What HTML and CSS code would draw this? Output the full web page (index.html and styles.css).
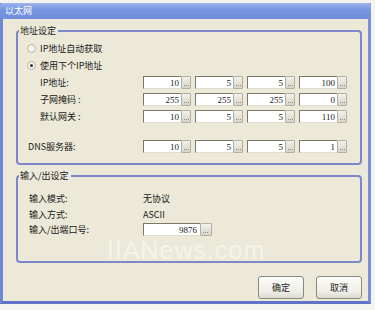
FILE: index.html
```html
<!DOCTYPE html>
<html>
<head>
<meta charset="utf-8">
<link rel="stylesheet" href="styles.css">
</head>
<body>
<div class="win">
  <div class="titlebar">以太网</div>
  <div class="client">
    <fieldset class="group g1">
      <legend>地址设定</legend>
      <div class="radio-row"><span class="radio"></span><span>IP地址自动获取</span></div>
      <div class="radio-row"><span class="radio checked"></span><span>使用下个IP地址</span></div>
      <div class="ip-row"><span class="lbl">IP地址:</span>
        <div class="ipbox"><span class="fld">10</span><span class="btn"></span></div>
        <div class="ipbox"><span class="fld">5</span><span class="btn"></span></div>
        <div class="ipbox"><span class="fld">5</span><span class="btn"></span></div>
        <div class="ipbox"><span class="fld">100</span><span class="btn"></span></div>
      </div>
      <div class="ip-row"><span class="lbl">子网掩码 :</span>
        <div class="ipbox"><span class="fld">255</span><span class="btn"></span></div>
        <div class="ipbox"><span class="fld">255</span><span class="btn"></span></div>
        <div class="ipbox"><span class="fld">255</span><span class="btn"></span></div>
        <div class="ipbox"><span class="fld">0</span><span class="btn"></span></div>
      </div>
      <div class="ip-row"><span class="lbl">默认网关 :</span>
        <div class="ipbox"><span class="fld">10</span><span class="btn"></span></div>
        <div class="ipbox"><span class="fld">5</span><span class="btn"></span></div>
        <div class="ipbox"><span class="fld">5</span><span class="btn"></span></div>
        <div class="ipbox"><span class="fld">110</span><span class="btn"></span></div>
      </div>
      <div class="ip-row dns"><span class="lbl">DNS服务器:</span>
        <div class="ipbox"><span class="fld">10</span><span class="btn"></span></div>
        <div class="ipbox"><span class="fld">5</span><span class="btn"></span></div>
        <div class="ipbox"><span class="fld">5</span><span class="btn"></span></div>
        <div class="ipbox"><span class="fld">1</span><span class="btn"></span></div>
      </div>
    </fieldset>
    <fieldset class="group g2">
      <legend>输入/出设定</legend>
      <div class="io-row"><span class="lbl">输入模式:</span><span>无协议</span></div>
      <div class="io-row"><span class="lbl">输入方式:</span><span>ASCII</span></div>
      <div class="io-row port"><span class="lbl">输入/出端口号:</span>
        <div class="ipbox wide"><span class="fld">9876</span><span class="btn"></span></div>
      </div>
    </fieldset>
    <div class="actions">
      <button class="pbtn">确定</button>
      <button class="pbtn">取消</button>
    </div>
    <div class="watermark">IIANews.com</div>
  </div>
</div>
</body>
</html>
```
FILE: styles.css
```css
html, body {
  margin: 0;
  padding: 0;
  background: #f4f4f2;
  width: 375px;
  height: 310px;
  overflow: hidden;
}
body {
  font-family: "Liberation Serif", "Noto Sans CJK SC", serif;
  font-size: 9px;
  color: #1a1a1a;
}
.win {
  margin-top: 3px;
  width: 371px;
  box-sizing: border-box;
  border-left: 3px solid #6f86d6;
  border-right: 3px solid #7a8fda;
  border-bottom: 3px solid #5f74c8;
  background: #ece9d8;
  position: relative;
}
.titlebar {
  height: 16px;
  margin: 0 -3px;
  padding-left: 5px;
  background: linear-gradient(#9db6ee, #7896e0 40%, #6f8edc);
  color: #fff;
  font-family: "Noto Sans CJK SC", sans-serif;
  font-size: 9px;
  line-height: 16px;
  border-radius: 3px 3px 0 0;
}
.client {
  padding: 6px 6px 6px 13px;
  height: 282px;
  box-sizing: border-box;
  position: relative;
}
.group {
  margin: 0;
  padding: 0 0 8px 0;
  border: 2px solid #7d87c9;
  border-radius: 4px;
  min-width: 0;
}
.group legend {
  margin-left: 1px;
  padding: 0 2px 0 1px;
  line-height: 12px;
  font-family: "Noto Sans CJK SC", sans-serif;
  font-size: 9px;
  color: #222;
}
.g1 { padding-top: 3px; padding-bottom: 8px; }
.radio-row {
  height: 17px;
  display: flex;
  align-items: center;
  padding-left: 9px;
  gap: 4px;
}
.radio {
  width: 7px;
  height: 7px;
  border-radius: 50%;
  border: 1px solid #b9b6aa;
  background: #f4f2ea;
  position: relative;
}
.radio.checked::after {
  content: "";
  position: absolute;
  left: 2px;
  top: 2px;
  width: 3px;
  height: 3px;
  border-radius: 50%;
  background: #333;
}
.ip-row {
  height: 17px;
  display: flex;
  align-items: center;
  padding-left: 22px;
}
.ip-row .lbl {
  width: 103px;
}
.ip-row.dns {
  margin-top: 13px;
  padding-left: 10px;
}
.ip-row.dns .lbl { width: 115px; }
.ipbox {
  display: flex;
  height: 13px;
  margin-right: 4px;
}
.fld {
  width: 38px;
  box-sizing: border-box;
  background: #fff;
  border-top: 1px solid #7b7868;
  border-left: 1px solid #7b7868;
  border-bottom: 1px solid #e0ddd0;
  text-align: right;
  padding-right: 2px;
  line-height: 12px;
  font-size: 9px;
}
.btn {
  width: 10px;
  box-sizing: border-box;
  background: linear-gradient(#f2f1ea, #d8d5c8);
  border: 1px solid #b3b0a2;
  border-radius: 1px;
  position: relative;
}
.btn::after {
  content: "";
  position: absolute;
  left: 2px;
  bottom: 2px;
  width: 5px;
  height: 1px;
  background: repeating-linear-gradient(90deg, #888 0 1px, transparent 1px 2px);
}
.g2 {
  margin-top: 5px;
  padding-top: 8px;
  padding-bottom: 25px;
}
.io-row {
  height: 16px;
  display: flex;
  align-items: center;
  padding-left: 11px;
  font-family: "Noto Sans CJK SC", sans-serif;
}
.io-row .lbl { width: 114px; }
.io-row.port { height: 14px; }
.ipbox.wide .fld { width: 57px; padding-right: 3px; font-family: "Liberation Serif", serif; }
.ipbox.wide .btn { width: 12px; }
.lbl, .radio-row span:last-child {
  font-family: "Noto Sans CJK SC", sans-serif;
}
.actions {
  display: flex;
  justify-content: flex-end;
  gap: 12px;
  margin-top: 13px;
}
.pbtn {
  width: 46px;
  height: 23px;
  padding: 0;
  border: 1px solid #8c8a80;
  border-radius: 3px;
  background: linear-gradient(#fbfbf8, #efeee8 70%, #dcdad0);
  font-family: "Noto Sans CJK SC", sans-serif;
  font-size: 9px;
  color: #222;
}
.watermark {
  position: absolute;
  left: 104px;
  top: 222px;
  font-family: "Liberation Sans", sans-serif;
  font-size: 25px;
  line-height: 18px;
  letter-spacing: 1px;
  color: rgba(255, 255, 255, 0.5);
  pointer-events: none;
}
```
